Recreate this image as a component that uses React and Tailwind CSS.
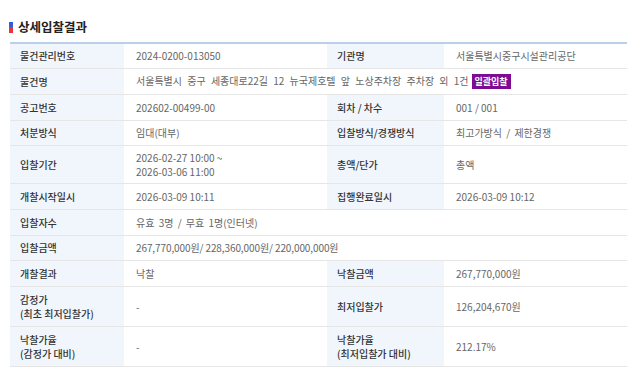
import React from 'react'

const FONT = { fontFamily: '"Noto Sans CJK KR", "Noto Sans", sans-serif' }

function Label({ children, w }) {
  return (
    <div className={`flex items-center bg-[#f0f6fc] pl-[10px] font-medium text-[#333] leading-[14px] ${w}`}>
      <div>{children}</div>
    </div>
  )
}

function Value({ children, w }) {
  return (
    <div className={`flex items-center pl-[12px] text-[#666] leading-[14px] ${w}`}>
      <div>{children}</div>
    </div>
  )
}

function Row({ h, children }) {
  return <div className={`flex border-b border-[#e6e6e6] ${h}`}>{children}</div>
}

export default function App() {
  return (
    <div className="h-[378px] w-[640px] bg-white text-[10px]" style={FONT}>
      {/* 제목 */}
      <div className="flex items-center gap-[5px] pl-[9px] pt-[19px] pb-[7px]">
        <span className="flex h-[11px] w-[4px] flex-col">
          <span className="h-[5px] bg-[#2f5fd0]" />
          <span className="flex-1 bg-[#e8353b]" />
        </span>
        <h2 className="text-[12.5px] font-bold leading-[16px] text-[#222]">상세입찰결과</h2>
      </div>

      <div className="ml-[10px] w-[617px] border-t-2 border-[#b9d0e8]">
        <Row h="h-[25px]">
          <Label w="w-[114px]">물건관리번호</Label>
          <Value w="w-[203px]">2024-0200-013050</Value>
          <Label w="w-[117px]">기관명</Label>
          <Value w="flex-1">서울특별시중구시설관리공단</Value>
        </Row>
        <Row h="h-[26px]">
          <Label w="w-[114px]">물건명</Label>
          <Value w="flex-1">
            <span className="[word-spacing:3px]">
              서울특별시 중구 세종대로22길 12 뉴국제호텔 앞 노상주차장 주차장 외 1건
            </span>
            <span className="ml-[3px] inline-block bg-[#7d0b93] px-[3px] text-[9px] font-bold leading-[15px] text-white">
              일괄입찰
            </span>
          </Value>
        </Row>
        <Row h="h-[26px]">
          <Label w="w-[114px]">공고번호</Label>
          <Value w="w-[203px]">202602-00499-00</Value>
          <Label w="w-[117px]">회차 / 차수</Label>
          <Value w="flex-1">001 / 001</Value>
        </Row>
        <Row h="h-[25px]">
          <Label w="w-[114px]">처분방식</Label>
          <Value w="w-[203px]">임대(대부)</Value>
          <Label w="w-[117px]">입찰방식/경쟁방식</Label>
          <Value w="flex-1">
            <span className="[word-spacing:2px]">최고가방식 / 제한경쟁</span>
          </Value>
        </Row>
        <Row h="h-[38px]">
          <Label w="w-[114px]">입찰기간</Label>
          <Value w="w-[203px]">
            2026-02-27 10:00 ~
            <br />
            2026-03-06 11:00
          </Value>
          <Label w="w-[117px]">총액/단가</Label>
          <Value w="flex-1">총액</Value>
        </Row>
        <Row h="h-[26px]">
          <Label w="w-[114px]">개찰시작일시</Label>
          <Value w="w-[203px]">2026-03-09 10:11</Value>
          <Label w="w-[117px]">집행완료일시</Label>
          <Value w="flex-1">2026-03-09 10:12</Value>
        </Row>
        <Row h="h-[26px]">
          <Label w="w-[114px]">입찰자수</Label>
          <Value w="flex-1">
            <span className="[word-spacing:2px]">유효 3명 / 무효 1명(인터넷)</span>
          </Value>
        </Row>
        <Row h="h-[25px]">
          <Label w="w-[114px]">입찰금액</Label>
          <Value w="flex-1">
            <span className="tracking-[-0.1px]">267,770,000원/ 228,360,000원/ 220,000,000원</span>
          </Value>
        </Row>
        <Row h="h-[26px]">
          <Label w="w-[114px]">개찰결과</Label>
          <Value w="w-[203px]">낙찰</Value>
          <Label w="w-[117px]">낙찰금액</Label>
          <Value w="flex-1">267,770,000원</Value>
        </Row>
        <Row h="h-[40px]">
          <Label w="w-[114px]">
            감정가
            <br />
            (최초 최저입찰가)
          </Label>
          <Value w="w-[203px]">-</Value>
          <Label w="w-[117px]">최저입찰가</Label>
          <Value w="flex-1">126,204,670원</Value>
        </Row>
        <Row h="h-[40px]">
          <Label w="w-[114px]">
            낙찰가율
            <br />
            (감정가 대비)
          </Label>
          <Value w="w-[203px]">-</Value>
          <Label w="w-[117px]">
            낙찰가율
            <br />
            (최저입찰가 대비)
          </Label>
          <Value w="flex-1">212.17%</Value>
        </Row>
      </div>
    </div>
  )
}
